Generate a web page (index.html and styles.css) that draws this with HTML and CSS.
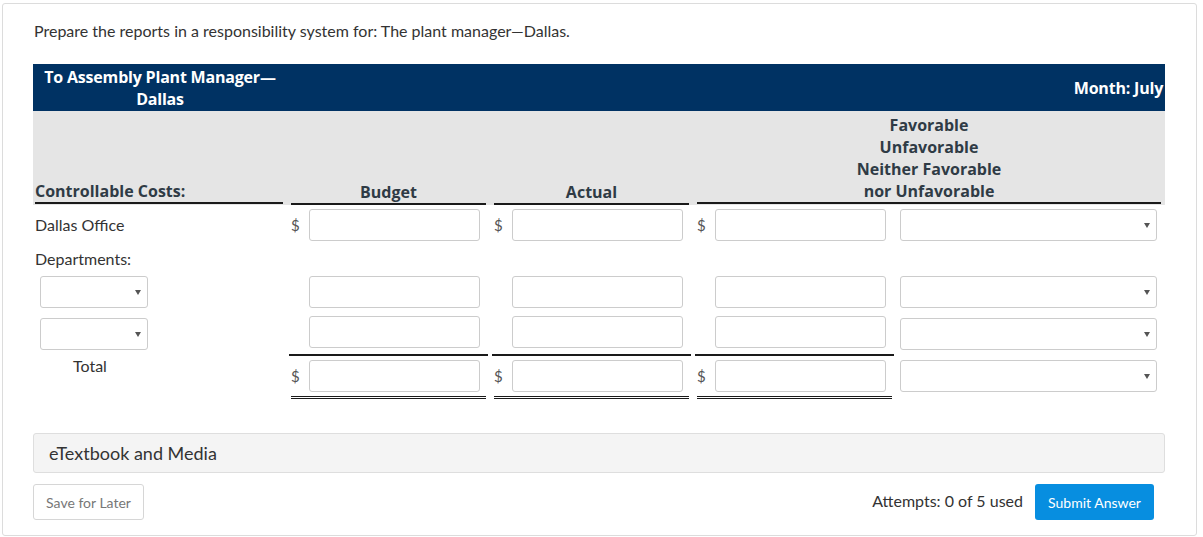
FILE: index.html
```html
<!DOCTYPE html>
<html>
<head>
<meta charset="utf-8">
<link rel="stylesheet" href="styles.css">
</head>
<body>
<div class="page">
  <p class="prompt">Prepare the reports in a responsibility system for: The plant manager—Dallas.</p>
  <table class="report">
    <colgroup>
      <col class="c-label"><col class="c-num"><col class="c-num"><col class="c-num"><col class="c-sel">
    </colgroup>
    <tr class="title-row">
      <td class="title-left">To Assembly Plant Manager— Dallas</td>
      <td colspan="4" class="title-right">Month: July</td>
    </tr>
    <tr class="head-row">
      <td class="h-label"><div class="hcell left">Controllable Costs:</div></td>
      <td class="num"><div class="hcell">Budget</div></td>
      <td class="num"><div class="hcell">Actual</div></td>
      <td colspan="2" class="span2"><div class="hcell">Favorable<br>Unfavorable<br>Neither Favorable<br>nor Unfavorable</div></td>
    </tr>
    <tr>
      <td class="lbl"><div class="cell">Dallas Office</div></td>
      <td class="num"><div class="cell"><span class="cur">$</span><span class="inp"></span></div></td>
      <td class="num"><div class="cell"><span class="cur">$</span><span class="inp"></span></div></td>
      <td class="num"><div class="cell"><span class="cur">$</span><span class="inp"></span></div></td>
      <td class="sel"><div class="cell"><span class="dd wide"></span></div></td>
    </tr>
    <tr>
      <td class="lbl"><div class="cell sub">Departments:</div></td>
      <td></td><td></td><td></td><td></td>
    </tr>
    <tr>
      <td class="lbl"><div class="cell dept"><span class="dd small"></span></div></td>
      <td class="num"><div class="cell"><span class="cur"></span><span class="inp"></span></div></td>
      <td class="num"><div class="cell"><span class="cur"></span><span class="inp"></span></div></td>
      <td class="num"><div class="cell"><span class="cur"></span><span class="inp"></span></div></td>
      <td class="sel"><div class="cell"><span class="dd wide"></span></div></td>
    </tr>
    <tr>
      <td class="lbl"><div class="cell dept"><span class="dd small"></span></div></td>
      <td class="num"><div class="cell single"><span class="cur"></span><span class="inp"></span></div></td>
      <td class="num"><div class="cell single"><span class="cur"></span><span class="inp"></span></div></td>
      <td class="num"><div class="cell single"><span class="cur"></span><span class="inp"></span></div></td>
      <td class="sel"><div class="cell"><span class="dd wide"></span></div></td>
    </tr>
    <tr>
      <td class="lbl top"><div class="total">Total</div></td>
      <td class="num"><div class="cell double"><span class="cur">$</span><span class="inp"></span></div></td>
      <td class="num"><div class="cell double"><span class="cur">$</span><span class="inp"></span></div></td>
      <td class="num"><div class="cell double"><span class="cur">$</span><span class="inp"></span></div></td>
      <td class="sel top"><div class="cell"><span class="dd wide"></span></div></td>
    </tr>
  </table>
  <div class="media">eTextbook and Media</div>
  <div class="actions">
    <button class="btn-save">Save for Later</button>
    <div class="right">
      <span class="attempts">Attempts: 0 of 5 used</span>
      <button class="btn-submit">Submit Answer</button>
    </div>
  </div>
</div>
</body>
</html>
```
FILE: styles.css
```css
html, body { margin: 0; padding: 0; background: #fff; }
body { font-family: Lato, "Open Sans", sans-serif; color: #333; }
.page {
  margin: 3px 6px 0 2px;
  border: 1px solid #dcdcdc;
  border-radius: 3px;
  padding: 17px 30px 14px 30px;
  height: 500px;
  box-sizing: content-box;
}
.prompt { margin: 0 0 23px 1px; font-size: 16px; line-height: 20px; color: #333; }
.report { width: 1132px; border-collapse: collapse; table-layout: fixed; }
.c-label { width: 254px; }
.c-num { width: 203px; }
.c-sel { width: 269px; }
.report td { padding: 0; }
.title-row td { background: #003263; color: #fff; font-family: "Open Sans", sans-serif; font-weight: 700; font-size: 16px; line-height: 22px; letter-spacing: -0.2px; height: 47px; box-sizing: border-box; }
.title-left { text-align: center; padding: 2px 6px 0 6px !important; vertical-align: top; }
.title-right { text-align: right; padding-right: 2px !important; vertical-align: middle; }
.head-row td { background: #e5e5e5; vertical-align: bottom; padding: 3px 4px 1px 4px; font-family: "Open Sans", sans-serif; font-weight: 700; font-size: 16px; line-height: 22px; color: #2f3b45; }
.head-row td.h-label { padding-left: 2px; padding-right: 4px; }
.hcell { border-bottom: 2px solid #1a1a1a; text-align: center; }
.hcell.left { text-align: left; }
.report td.num { padding: 0 4px; }
.report td.lbl { padding: 0 4px 0 2px; }
.report td.sel { padding: 0 0 0 4px; }
.report td.top { vertical-align: top; }
.cell { padding: 4px 0; display: flex; align-items: center; font-size: 16px; line-height: 20px; color: #333; min-height: 32px; }
.cell.sub { min-height: 0; padding: 4px 0 3px; }
.cell.dept { padding-left: 5px; }
.cell.single { border-bottom: 2px solid #1a1a1a; margin: 0 -2px; padding: 4px 2px 6px 2px; }
.cell.double { border-bottom: 3px double #1a1a1a; padding-top: 4px; }
.cur { width: 18px; flex: none; color: #555; font-size: 15px; }
.inp { width: 171px; height: 32px; box-sizing: border-box; border: 1px solid #ccc; border-radius: 3px; background: #fff; display: block; flex: none; }
.dd { position: relative; display: block; height: 32px; box-sizing: border-box; border: 1px solid #ccc; border-radius: 3px; background: #fff; }
.dd.wide { width: 257px; }
.dd.small { width: 108px; }
.dd::after { content: ""; position: absolute; right: 6px; top: 13px; border-left: 3px solid transparent; border-right: 3px solid transparent; border-top: 5px solid #555; }
.total { font-size: 16px; line-height: 20px; padding: 0 0 0 38px; color: #333; }
.media {
  margin-top: 34px;
  height: 40px;
  box-sizing: border-box;
  background: #f4f4f4;
  border: 1px solid #dedede;
  border-radius: 3px;
  width: 1132px;
  padding: 0 15px;
  display: flex;
  align-items: center;
  font-size: 18px;
  color: #333;
}
.actions { margin-top: 11px; width: 1132px; display: flex; justify-content: space-between; align-items: center; }
.btn-save { height: 36px; width: 111px; border: 1px solid #d6d6d6; border-radius: 3px; background: #fff; color: #777; font-family: Lato, sans-serif; font-size: 14px; padding: 0; }
.right { display: flex; align-items: center; gap: 12px; padding-right: 11px; }
.attempts { font-size: 16px; color: #333; position: relative; top: -2px; }
.btn-submit { height: 36px; width: 119px; border: none; border-radius: 3px; background: #078ee0; color: #fff; font-family: Lato, sans-serif; font-size: 14px; padding: 0; }
```
